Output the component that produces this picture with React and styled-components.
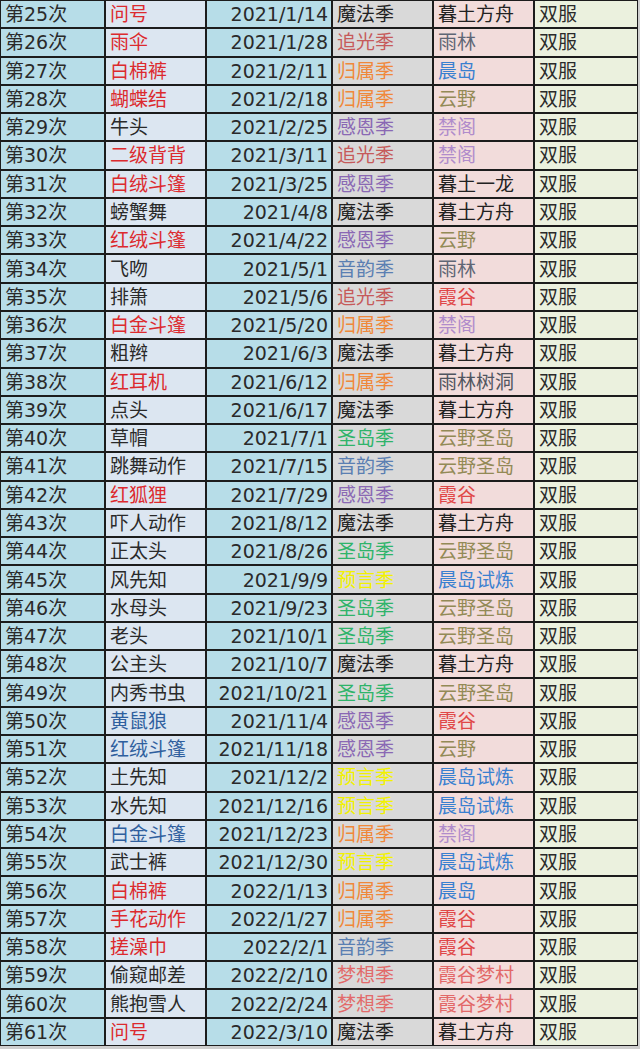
import React from "react";
import styled, { createGlobalStyle } from "styled-components";

const GlobalStyle = createGlobalStyle`
  body {
    margin: 0;
    padding: 0;
    background: #cfcfcf;
  }
`;

const rows = [
  [25, "问号", "red", "2021/1/14", "魔法季", "暮土方舟"],
  [26, "雨伞", "red", "2021/1/28", "追光季", "雨林"],
  [27, "白棉裤", "red", "2021/2/11", "归属季", "晨岛"],
  [28, "蝴蝶结", "red", "2021/2/18", "归属季", "云野"],
  [29, "牛头", "dark", "2021/2/25", "感恩季", "禁阁"],
  [30, "二级背背", "red", "2021/3/11", "追光季", "禁阁"],
  [31, "白绒斗篷", "red", "2021/3/25", "感恩季", "暮土一龙"],
  [32, "螃蟹舞", "dark", "2021/4/8", "魔法季", "暮土方舟"],
  [33, "红绒斗篷", "red", "2021/4/22", "感恩季", "云野"],
  [34, "飞吻", "dark", "2021/5/1", "音韵季", "雨林"],
  [35, "排箫", "dark", "2021/5/6", "追光季", "霞谷"],
  [36, "白金斗篷", "red", "2021/5/20", "归属季", "禁阁"],
  [37, "粗辫", "dark", "2021/6/3", "魔法季", "暮土方舟"],
  [38, "红耳机", "red", "2021/6/12", "归属季", "雨林树洞"],
  [39, "点头", "dark", "2021/6/17", "魔法季", "暮土方舟"],
  [40, "草帽", "dark", "2021/7/1", "圣岛季", "云野圣岛"],
  [41, "跳舞动作", "dark", "2021/7/15", "音韵季", "云野圣岛"],
  [42, "红狐狸", "red", "2021/7/29", "感恩季", "霞谷"],
  [43, "吓人动作", "dark", "2021/8/12", "魔法季", "暮土方舟"],
  [44, "正太头", "dark", "2021/8/26", "圣岛季", "云野圣岛"],
  [45, "风先知", "dark", "2021/9/9", "预言季", "晨岛试炼"],
  [46, "水母头", "dark", "2021/9/23", "圣岛季", "云野圣岛"],
  [47, "老头", "dark", "2021/10/1", "圣岛季", "云野圣岛"],
  [48, "公主头", "dark", "2021/10/7", "魔法季", "暮土方舟"],
  [49, "内秀书虫", "dark", "2021/10/21", "圣岛季", "云野圣岛"],
  [50, "黄鼠狼", "blue", "2021/11/4", "感恩季", "霞谷"],
  [51, "红绒斗篷", "blue", "2021/11/18", "感恩季", "云野"],
  [52, "土先知", "dark", "2021/12/2", "预言季", "晨岛试炼"],
  [53, "水先知", "dark", "2021/12/16", "预言季", "晨岛试炼"],
  [54, "白金斗篷", "blue", "2021/12/23", "归属季", "禁阁"],
  [55, "武士裤", "dark", "2021/12/30", "预言季", "晨岛试炼"],
  [56, "白棉裤", "red", "2022/1/13", "归属季", "晨岛"],
  [57, "手花动作", "red", "2022/1/27", "归属季", "霞谷"],
  [58, "搓澡巾", "red", "2022/2/1", "音韵季", "霞谷"],
  [59, "偷窥邮差", "dark", "2022/2/10", "梦想季", "霞谷梦村"],
  [60, "熊抱雪人", "dark", "2022/2/24", "梦想季", "霞谷梦村"],
  [61, "问号", "red", "2022/3/10", "魔法季", "暮土方舟"]
];

const itemColors = {
  red: "#dc2a2e",
  dark: "#2a2a2a",
  blue: "#2f5f9e"
};

const seasonColors = {
  魔法季: "#222222",
  追光季: "#c65a5a",
  归属季: "#f0883a",
  感恩季: "#8a68b4",
  音韵季: "#5b7fb2",
  圣岛季: "#2fb46a",
  预言季: "#f2f200",
  梦想季: "#e26a6a"
};

const placeColors = {
  暮土方舟: "#222222",
  暮土一龙: "#222222",
  雨林: "#5f6675",
  雨林树洞: "#505560",
  晨岛: "#3a80d0",
  晨岛试炼: "#3a80d0",
  云野: "#938a56",
  云野圣岛: "#938a56",
  禁阁: "#b08ccb",
  霞谷: "#e04848",
  霞谷梦村: "#e26868"
};

const Sheet = styled.div`
  display: grid;
  grid-template-columns: 103px 99px 124px 99px 99px 102px;
  grid-template-rows: repeat(37, 1fr);
  gap: 2px;
  width: 638px;
  height: 1046px;
  box-sizing: border-box;
  border: 1px solid #1c1c1c;
  background: #1c1c1c;
`;

const Cell = styled.div`
  display: flex;
  align-items: center;
  justify-content: ${(p) => (p.$right ? "flex-end" : "flex-start")};
  padding: 1px 3px 0 ${(p) => (p.$right ? "0" : "4px")};
  background: ${(p) => p.$bg};
  color: ${(p) => p.$color || "#2a2a2a"};
  font-family: "DejaVu Sans", "Noto Sans CJK SC", sans-serif;
  font-size: 19px;
  line-height: 1;
  white-space: nowrap;
  overflow: hidden;
`;

const BG = {
  index: "#b7dde8",
  item: "#dce6f1",
  date: "#b7dde8",
  season: "#d9d9d9",
  place: "#f2dcdb",
  server: "#ebf1de"
};

export default function App() {
  return (
    <>
      <GlobalStyle />
      <Sheet>
        {rows.map(([n, item, tone, date, season, place]) => (
          <React.Fragment key={n}>
            <Cell $bg={BG.index}>第{n}次</Cell>
            <Cell $bg={BG.item} $color={itemColors[tone]}>
              {item}
            </Cell>
            <Cell $bg={BG.date} $right>
              {date}
            </Cell>
            <Cell $bg={BG.season} $color={seasonColors[season]}>
              {season}
            </Cell>
            <Cell $bg={BG.place} $color={placeColors[place]}>
              {place}
            </Cell>
            <Cell $bg={BG.server}>双服</Cell>
          </React.Fragment>
        ))}
      </Sheet>
    </>
  );
}
